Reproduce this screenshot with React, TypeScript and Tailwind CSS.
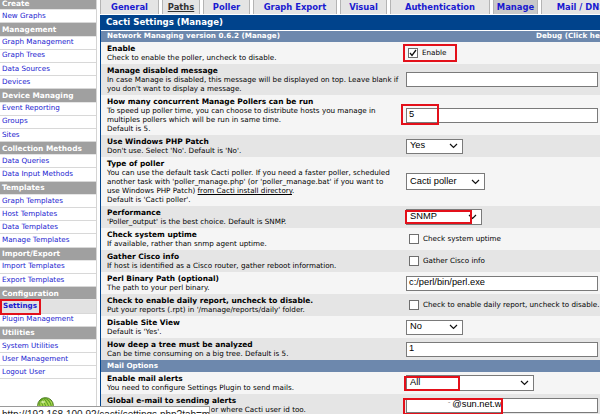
import React from 'react';

const VF = "font-['DejaVu_Sans',Verdana,sans-serif]";
const AF = "font-['Liberation_Sans',Arial,sans-serif]";

type Kind = 'h' | 'l' | 's';

const menu: [string, Kind][] = [
  ['Create', 'h'],
  ['New Graphs', 'l'],
  ['Management', 'h'],
  ['Graph Management', 'l'],
  ['Graph Trees', 'l'],
  ['Data Sources', 'l'],
  ['Devices', 'l'],
  ['Device Managing', 'h'],
  ['Event Reporting', 'l'],
  ['Groups', 'l'],
  ['Sites', 'l'],
  ['Collection Methods', 'h'],
  ['Data Queries', 'l'],
  ['Data Input Methods', 'l'],
  ['Templates', 'h'],
  ['Graph Templates', 'l'],
  ['Host Templates', 'l'],
  ['Data Templates', 'l'],
  ['Manage Templates', 'l'],
  ['Import/Export', 'h'],
  ['Import Templates', 'l'],
  ['Export Templates', 'l'],
  ['Configuration', 'h'],
  ['Settings', 's'],
  ['Plugin Management', 'l'],
  ['Utilities', 'h'],
  ['System Utilities', 'l'],
  ['User Management', 'l'],
  ['Logout User', 'l'],
];

const tabs = [
  { name: 'General', w: 'w-[59px]' },
  { name: 'Paths', w: 'w-[38px]', visited: true },
  { name: 'Poller', w: 'w-[47px]' },
  { name: 'Graph Export', w: 'w-[84px]' },
  { name: 'Visual', w: 'w-[47px]' },
  { name: 'Authentication', w: 'w-[100px]' },
  { name: 'Manage', w: 'w-[45px]', active: true },
  { name: 'Mail / DNS', w: 'w-[80px]' },
];

function Sidebar() {
  return (
    <div className={`w-[97px] shrink-0 flex flex-col border-r border-[#d4d4d4] text-[7.2px] ${VF}`}>
      <div className="mt-[-3px]">
        {menu.map(([label, kind]) => {
          if (kind === 'h') {
            return (
              <div key={label} className="h-[13.2px] bg-[#a0a0a0] border-b border-[#e6e6e6] flex items-center pl-[2px] text-[7.4px] font-bold text-white">
                {label}
              </div>
            );
          }
          if (kind === 's') {
            return (
              <div key={label} className="relative h-[13.2px] bg-[#e2e2e2] border-b border-[#d8d8d8] flex items-center pl-[3px] font-bold text-[#1a1ad0]">
                {label}
                <div className="absolute left-0 top-[-1px] w-[41px] h-[16px] border-2 border-[#e3101a]" />
              </div>
            );
          }
          return (
            <div key={label} className="h-[13.2px] bg-white border-b border-[#d8d8d8] flex items-center pl-[2px] text-[#1a1ad0]">
              {label}
            </div>
          );
        })}
      </div>
      <div className="pl-[37px] pt-[18px]">
        <svg width="17" height="17" viewBox="0 0 17 17" className="block">
          <circle cx="8.5" cy="8.5" r="7.8" fill="#a8d84c" stroke="#3f6e18" strokeWidth="1" />
          <g transform="rotate(-25 8.5 8.5)" fill="none" stroke="#5c9a26" strokeWidth="1">
            <ellipse cx="8.5" cy="8.5" rx="2.6" ry="7.6" />
            <ellipse cx="8.5" cy="8.5" rx="5.4" ry="7.6" />
            <line x1="8.5" y1="0.9" x2="8.5" y2="16.1" />
          </g>
          <ellipse cx="6" cy="5" rx="2" ry="1.2" fill="#e4f7b8" opacity="0.7" />
        </svg>
      </div>
    </div>
  );
}

function Chevron() {
  return (
    <svg width="9" height="6" viewBox="0 0 9 6" className="shrink-0">
      <polyline points="1,1 4.5,4.5 8,1" fill="none" stroke="#111" strokeWidth="1.2" />
    </svg>
  );
}

function Select({ value, w, h = 'h-[15px]', children }: { value: string; w: string; h?: string; children?: React.ReactNode }) {
  return (
    <div className={`relative ${w} ${h} border border-[#7a7a7a] bg-white flex items-center justify-between pl-[3px] pr-[4px] text-[9.3px] text-black ${AF}`}>
      <span>{value}</span>
      <Chevron />
      {children}
    </div>
  );
}

function TextBox({ value, children, pad = 'pl-[2px]' }: { value?: string; children?: React.ReactNode; pad?: string }) {
  return (
    <div className={`relative w-[192px] h-[15px] border border-[#7a7a7a] bg-white flex items-center ${pad} text-[9.3px] text-black ${AF}`}>
      {value}
      {children}
    </div>
  );
}

function Check({ label }: { label: string }) {
  return (
    <div className="flex items-center gap-[4px] pl-[3px] whitespace-nowrap">
      <span className="w-[10px] h-[10px] border border-[#6e6e6e] bg-white shrink-0" />
      <span className="text-[7.2px]">{label}</span>
    </div>
  );
}

function Row({ shade, title, lines, children }: { shade?: boolean; title: string; lines: React.ReactNode[]; children?: React.ReactNode }) {
  return (
    <div className={`flex ${shade ? 'bg-[#e5e5e5]' : 'bg-[#f5f5f5]'}`}>
      <div className="w-[302px] shrink-0 pl-[6px] py-[2px] text-[7.2px] leading-[9px] text-black">
        <div className="font-bold text-[7.45px] whitespace-nowrap">{title}</div>
        {lines.map((l, i) => (
          <div key={i} className="whitespace-nowrap">{l}</div>
        ))}
      </div>
      <div className="flex-1 flex items-center pl-[3px]">{children}</div>
    </div>
  );
}

export default function App() {
  return (
    <div className={`relative w-[600px] h-[414px] overflow-hidden flex bg-white ${VF}`}>
      <Sidebar />
      <div className="ml-[3px] w-[540px] shrink-0 flex flex-col">
        <div className="flex gap-[3px] h-[14px]">
          {tabs.map((t) => (
            <div
              key={t.name}
              className={`${t.w} shrink-0 h-[14px] flex items-center justify-center border-x border-[#b4b4b4] text-[8.4px] font-bold whitespace-nowrap ${
                t.active ? 'bg-[#c9c9c9]' : 'bg-[#e4e4e4]'
              } ${t.visited ? 'text-[#333] underline' : 'text-[#1a1ad0]'}`}
            >
              {t.name}
            </div>
          ))}
        </div>
        <div className="mt-[1px] border-l border-[#00438c] flex flex-col">
          <div className="h-[15px] bg-[#00438c] flex items-center pl-[5px] text-[8.6px] font-bold text-white">
            Cacti Settings (Manage)
          </div>
          <div className="mt-[1px] h-[11px] bg-[#6d88ad] flex items-center pl-[6px] text-[7.2px] font-bold text-white whitespace-nowrap">
            <span className="w-[429px] shrink-0">Network Managing version 0.6.2 (Manage)</span>
            <span>Debug (Click here to show)</span>
          </div>

          <Row title="Enable" lines={['Check to enable the poller, uncheck to disable.']}>
            <div className="ml-[-3px] w-[54px] h-[18px] border-2 border-[#e3101a] flex items-center gap-[4px] pl-[3px]">
              <span className="w-[10px] h-[10px] border border-[#6e6e6e] bg-white flex items-center justify-center shrink-0">
                <svg width="8" height="8" viewBox="0 0 8 8">
                  <polyline points="1,4 3,6.5 7,1" fill="none" stroke="#111" strokeWidth="1.3" />
                </svg>
              </span>
              <span className="text-[7.2px]">Enable</span>
            </div>
          </Row>

          <Row
            shade
            title="Manage disabled message"
            lines={[
              'In case Manage is disabled, this message will be displayed on top. Leave blank if',
              "you don't want to display a message.",
            ]}
          >
            <TextBox />
          </Row>

          <Row
            title="How many concurrent Manage Pollers can be run"
            lines={[
              'To speed up poller time, you can choose to distribute hosts you manage in',
              'multiples pollers which will be run in same time.',
              'Default is 5.',
            ]}
          >
            <TextBox value="5">
              <div className="absolute left-[-6px] top-[-5px] w-[38px] h-[21px] border-2 border-[#e3101a]" />
            </TextBox>
          </Row>

          <Row shade title="Use Windows PHP Patch" lines={["Don't use. Select 'No'. Default is 'No'."]}>
            <Select value="Yes" w="w-[57px]" />
          </Row>

          <Row
            title="Type of poller"
            lines={[
              'You can use the default task Cacti poller. If you need a faster poller, scheduled',
              "another task with 'poller_manage.php' (or 'poller_manage.bat' if you want to",
              <>
                use Windows PHP Patch) <span className="underline">from Cacti install directory</span>.
              </>,
              "Default is 'Cacti poller'.",
            ]}
          >
            <Select value="Cacti poller" w="w-[79px]" h="h-[17px]" />
          </Row>

          <Row shade title="Performance" lines={["'Poller_output' is the best choice. Default is SNMP."]}>
            <Select value="SNMP" w="w-[76px]" h="h-[16px]">
              <div className="absolute left-[-2px] top-[0px] w-[67px] h-[14px] border-2 border-[#e3101a]" />
            </Select>
          </Row>

          <Row title="Check system uptime" lines={['If available, rather than snmp agent uptime.']}>
            <Check label="Check system uptime" />
          </Row>

          <Row shade title="Gather Cisco info" lines={['If host is identified as a Cisco router, gather reboot information.']}>
            <Check label="Gather Cisco info" />
          </Row>

          <Row title="Perl Binary Path (optional)" lines={['The path to your perl binary.']}>
            <TextBox value="c:/perl/bin/perl.exe" />
          </Row>

          <Row
            shade
            title="Check to enable daily report, uncheck to disable."
            lines={["Put your reports (.rpt) in '/manage/reports/daily' folder."]}
          >
            <Check label="Check to enable daily report, uncheck to disable." />
          </Row>

          <Row title="Disable Site View" lines={["Default is 'Yes'."]}>
            <Select value="No" w="w-[57px]" />
          </Row>

          <Row shade title="How deep a tree must be analyzed" lines={['Can be time consuming on a big tree. Default is 5.']}>
            <TextBox value="1" />
          </Row>

          <div className="h-[12px] bg-[#6d88ad] flex items-center pl-[6px] text-[7.2px] font-bold text-white">
            Mail Options
          </div>

          <Row title="Enable mail alerts" lines={['You need to configure Settings Plugin to send mails.']}>
            <Select value="All" w="w-[128px]" h="h-[16px]">
              <div className="absolute left-[-3px] top-[0px] w-[56px] h-[15px] border-2 border-[#e3101a]" />
            </Select>
          </Row>

          <Row shade title="Global e-mail to sending alerts" lines={['Use the address of the user, or where Cacti user id too.']}>
            <TextBox pad="pl-[41px]">
              <span className="text-[#888] text-[7px] mr-[2px]">ˇ</span>
              @sun.net.w
              <div className="absolute left-[-4px] top-[-1px] w-[100px] h-[17px] border-2 border-[#e3101a]" />
            </TextBox>
          </Row>
        </div>
      </div>

      <div className={`absolute left-0 top-[406px] w-[210px] h-[10px] bg-white border-t border-r border-[#9a9a9a] overflow-hidden pl-[2px] text-[10px] leading-[10px] pt-[3px] text-[#222] whitespace-nowrap ${AF}`}>
        http://192.168.100.92/cacti/settings.php?tab=manage
      </div>
    </div>
  );
}
